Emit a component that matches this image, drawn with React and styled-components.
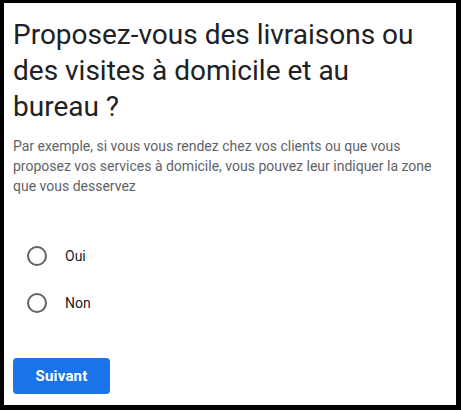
import React, {useState} from 'react';
import styled, {createGlobalStyle} from 'styled-components';

const GlobalStyle = createGlobalStyle`
  html, body {
    margin: 0;
    padding: 0;
    background: #000;
  }
  * {
    box-sizing: border-box;
  }
`;

const Frame = styled.div`
  width: 461px;
  height: 410px;
  border-style: solid;
  border-color: #000;
  border-width: 3px 5px 5px 4px;
  background-color: #fff;
  padding: 14px 9px 0 9px;
  font-family: Roboto, "Liberation Sans", Arial, sans-serif;
  overflow: hidden;
`;

const Title = styled.h1`
  margin: 0;
  max-width: 405px;
  font-size: 28px;
  font-weight: 400;
  line-height: 36px;
  color: #202124;
`;

const Description = styled.p`
  margin: 11px 0 0 0;
  font-size: 14px;
  line-height: 20px;
  color: #5f6368;
`;

const Options = styled.div`
  display: flex;
  flex-direction: column;
  gap: 7px;
  margin-top: 40px;
`;

const Option = styled.label`
  display: flex;
  align-items: center;
  height: 40px;
  padding-left: 14px;
  gap: 18px;
  cursor: pointer;
  font-size: 14px;
  color: #202124;
`;

const Radio = styled.span`
  width: 20px;
  height: 20px;
  border-radius: 50%;
  border: 2px solid ${(p) => (p.checked ? '#1a73e8' : '#5f6368')};
  display: flex;
  align-items: center;
  justify-content: center;

  &::after {
    content: '';
    width: 10px;
    height: 10px;
    border-radius: 50%;
    background: #1a73e8;
    display: ${(p) => (p.checked ? 'block' : 'none')};
  }
`;

const NextButton = styled.button`
  margin-top: 35px;
  width: 97px;
  height: 36px;
  border: none;
  border-radius: 4px;
  background-color: #1a73e8;
  color: #fff;
  font-family: Roboto, "Liberation Sans", Arial, sans-serif;
  font-size: 15px;
  font-weight: 700;
  letter-spacing: 0.2px;
  cursor: pointer;
`;

const options = ['Oui', 'Non'];

export default function App() {
    const [value, setValue] = useState(null);

    return (
        <>
            <GlobalStyle/>
            <Frame>
                <Title>Proposez-vous des livraisons ou des visites à domicile et au bureau ?</Title>
                <Description>
                    Par exemple, si vous vous rendez chez vos clients ou que vous proposez vos services à domicile, vous pouvez leur indiquer la zone que vous desservez
                </Description>
                <Options>
                    {options.map((opt) => (
                        <Option key={opt} onClick={() => setValue(opt)}>
                            <Radio checked={value === opt}/>
                            <span>{opt}</span>
                        </Option>
                    ))}
                </Options>
                <NextButton>Suivant</NextButton>
            </Frame>
        </>
    );
}
